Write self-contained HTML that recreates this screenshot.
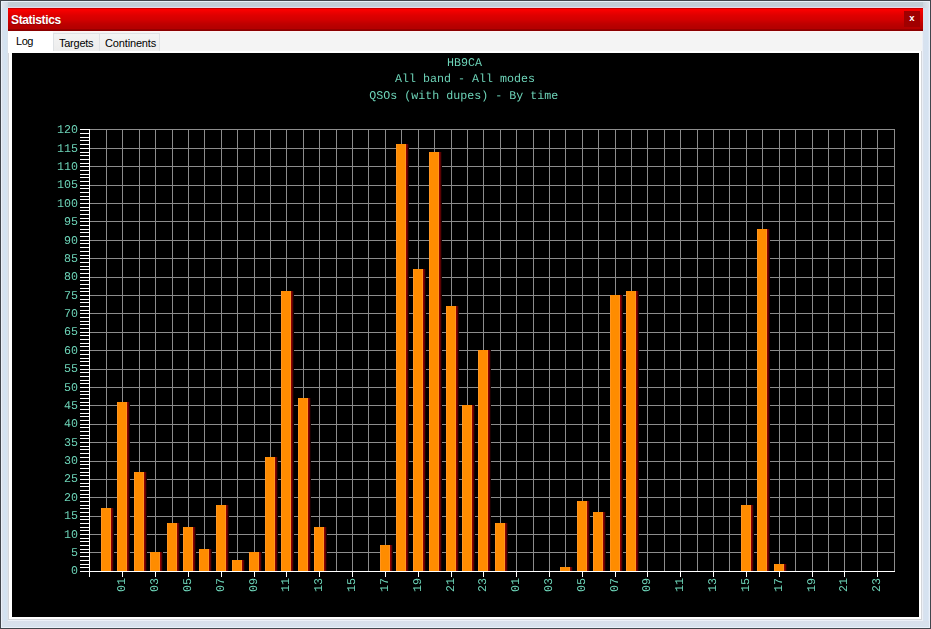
<!DOCTYPE html>
<html><head><meta charset="utf-8"><title>Statistics</title>
<style>
html,body{margin:0;padding:0;}
body{width:931px;height:629px;overflow:hidden;background:#41454c;font-family:"Liberation Sans",sans-serif;position:relative;}
.abs{position:absolute;}
span,.close{opacity:.996;}
.f1{left:1px;top:1px;width:929px;height:627px;background:#eaf1fa;}
.f2{left:2px;top:2px;width:927px;height:625px;background:#d6e1ee;}
.ftop{left:2px;top:2px;width:927px;height:6px;background:linear-gradient(#c3ced6 0,#c3ced6 60%,#c2d0e0 70%,#c0d4ec 83%,#c4d6ec 100%);}
.c1{left:2px;top:2px;width:6px;height:6px;background:linear-gradient(90deg,#e2e6f0,#d0d8e4);}
.c2{left:923px;top:2px;width:6px;height:6px;background:linear-gradient(90deg,#ccd6e0,#dfe6ee);}
.ftl{left:8px;top:7px;width:915px;height:1px;background:#ecd8e0;}
.fl{left:2px;top:8px;width:6px;height:613px;background:linear-gradient(90deg,#dce0ea,#d8e2ee 20%,#d3e3f2 45%,#d3e3f2 60%,#d6e2ee 80%,#dce2ea);}
.fr{left:923px;top:8px;width:6px;height:613px;background:linear-gradient(90deg,#dde1ea,#d6e2f0 20%,#d6e2f0 80%,#e0eaf6);}
.fb{left:2px;top:621px;width:927px;height:6px;background:linear-gradient(#d9e0ec,#d6e2ee);}
.client{left:8px;top:8px;width:915px;height:613px;background:#ebf0f8;}
.title{left:8px;top:8px;width:915px;height:23px;background:linear-gradient(#c80000 0,#c80000 4.3%,#fe0000 4.4%,#fa0000 8%,#ec0000 19.5%,#de0000 32.6%,#d40000 50%,#c00000 67.4%,#b60000 82%,#b40000 91.2%,#980000 91.3%,#940000 95.6%,#8a0000 95.7%,#8a0000 100%);}
.title span{position:absolute;left:3px;top:5px;font-weight:bold;font-size:12px;line-height:14px;color:#fff;letter-spacing:-0.35px;text-shadow:0 1px 1px rgba(120,0,0,.6);}
.close{left:904px;top:11px;width:16px;height:16px;background:#a00000;color:#fff;font-weight:bold;font-size:9.5px;line-height:13px;text-align:center;}
.tabctl{left:8px;top:31px;width:914px;height:589px;background:#fff;box-sizing:border-box;border:1px solid #d4d6da;border-top:none;}
.strip{left:8px;top:31px;width:914px;height:20px;background:#f4f4f4;border-top:1px solid #fff4f4;box-sizing:border-box;}
.tab{box-sizing:border-box;font-size:11px;line-height:13px;color:#000;white-space:nowrap;}
.tsel{left:8px;top:31px;width:45px;height:22px;background:#fff;}
.tsel span{position:absolute;left:8px;top:4px;letter-spacing:-0.45px;}
.t2{left:53px;top:33px;width:47px;height:18px;background:linear-gradient(#f4f4f4,#ececec);border:1px solid #dfe2e5;border-bottom:none;}
.t3{left:99px;top:33px;width:61px;height:18px;background:linear-gradient(#f4f4f4,#ececec);border:1px solid #dfe2e5;border-bottom:none;}
.t2 span,.t3 span{position:absolute;left:5px;top:2.5px;letter-spacing:-0.25px;}
.t3 span{letter-spacing:-0.15px;}
.chart{position:absolute;left:12px;top:53px;display:block;}
</style></head><body>
<div class="abs f1"></div><div class="abs f2"></div><div class="abs ftop"></div><div class="abs ftl"></div><div class="abs c1"></div><div class="abs c2"></div><div class="abs fl"></div><div class="abs fr"></div><div class="abs fb"></div>
<div class="abs client"></div>
<div class="abs title"><span>Statistics</span></div>
<div class="abs close">x</div>
<div class="abs tabctl"></div>
<div class="abs strip"></div>
<div class="abs tab tsel"><span>Log</span></div>
<div class="abs tab t2"><span>Targets</span></div>
<div class="abs tab t3"><span>Continents</span></div>
<svg class="chart" width="907" height="564" viewBox="12 53 907 564">
<rect x="12" y="53" width="907" height="564" fill="#000"/>
<path d="M90 571.5H895 M90 552.5H895 M90 534.5H895 M90 516.5H895 M90 497.5H895 M90 479.5H895 M90 461.5H895 M90 442.5H895 M90 424.5H895 M90 405.5H895 M90 387.5H895 M90 369.5H895 M90 350.5H895 M90 332.5H895 M90 313.5H895 M90 295.5H895 M90 277.5H895 M90 258.5H895 M90 240.5H895 M90 221.5H895 M90 203.5H895 M90 185.5H895 M90 166.5H895 M90 148.5H895 M90 129.5H895 M106.5 129V572 M122.5 129V572 M139.5 129V572 M155.5 129V572 M172.5 129V572 M188.5 129V572 M204.5 129V572 M221.5 129V572 M237.5 129V572 M254.5 129V572 M270.5 129V572 M286.5 129V572 M303.5 129V572 M319.5 129V572 M336.5 129V572 M352.5 129V572 M368.5 129V572 M385.5 129V572 M401.5 129V572 M418.5 129V572 M434.5 129V572 M451.5 129V572 M467.5 129V572 M483.5 129V572 M500.5 129V572 M516.5 129V572 M533.5 129V572 M549.5 129V572 M565.5 129V572 M582.5 129V572 M598.5 129V572 M615.5 129V572 M631.5 129V572 M647.5 129V572 M664.5 129V572 M680.5 129V572 M697.5 129V572 M713.5 129V572 M729.5 129V572 M746.5 129V572 M762.5 129V572 M779.5 129V572 M795.5 129V572 M812.5 129V572 M828.5 129V572 M844.5 129V572 M861.5 129V572 M877.5 129V572 M894.5 129V572" stroke="#8c8c8c" stroke-width="1" fill="none" shape-rendering="crispEdges"/>
<g shape-rendering="crispEdges"><path d="M111 508h1v64h-1z M127 402h1v170h-1z M144 472h1v100h-1z M160 552h1v20h-1z M177 523h1v49h-1z M193 527h1v45h-1z M209 549h1v23h-1z M226 505h1v67h-1z M242 560h1v12h-1z M259 552h1v20h-1z M275 457h1v115h-1z M291 291h1v281h-1z M308 398h1v174h-1z M324 527h1v45h-1z M390 545h1v27h-1z M406 144h1v428h-1z M423 269h1v303h-1z M439 152h1v420h-1z M456 306h1v266h-1z M472 405h1v167h-1z M488 350h1v222h-1z M505 523h1v49h-1z M570 567h1v5h-1z M587 501h1v71h-1z M603 512h1v60h-1z M620 295h1v277h-1z M636 291h1v281h-1z M751 505h1v67h-1z M767 229h1v343h-1z M784 564h1v8h-1z" fill="#8b0000"/><path d="M112 508h1v64h-1z M128 402h1v170h-1z M145 472h1v100h-1z M161 552h1v20h-1z M178 523h1v49h-1z M194 527h1v45h-1z M210 549h1v23h-1z M227 505h1v67h-1z M243 560h1v12h-1z M260 552h1v20h-1z M276 457h1v115h-1z M292 291h1v281h-1z M309 398h1v174h-1z M325 527h1v45h-1z M391 545h1v27h-1z M407 144h1v428h-1z M424 269h1v303h-1z M440 152h1v420h-1z M457 306h1v266h-1z M473 405h1v167h-1z M489 350h1v222h-1z M506 523h1v49h-1z M571 567h1v5h-1z M588 501h1v71h-1z M604 512h1v60h-1z M621 295h1v277h-1z M637 291h1v281h-1z M752 505h1v67h-1z M768 229h1v343h-1z M785 564h1v8h-1z" fill="#5c0303"/><path d="M113 508h1v64h-1z M129 402h1v170h-1z M146 472h1v100h-1z M162 552h1v20h-1z M179 523h1v49h-1z M195 527h1v45h-1z M211 549h1v23h-1z M228 505h1v67h-1z M244 560h1v12h-1z M261 552h1v20h-1z M277 457h1v115h-1z M293 291h1v281h-1z M310 398h1v174h-1z M326 527h1v45h-1z M392 545h1v27h-1z M408 144h1v428h-1z M425 269h1v303h-1z M441 152h1v420h-1z M458 306h1v266h-1z M474 405h1v167h-1z M490 350h1v222h-1z M507 523h1v49h-1z M572 567h1v5h-1z M589 501h1v71h-1z M605 512h1v60h-1z M622 295h1v277h-1z M638 291h1v281h-1z M753 505h1v67h-1z M769 229h1v343h-1z M786 564h1v8h-1z" fill="#1a0000"/><path d="M102 508h8v64h-8z M118 402h8v170h-8z M135 472h8v100h-8z M151 552h8v20h-8z M168 523h8v49h-8z M184 527h8v45h-8z M200 549h8v23h-8z M217 505h8v67h-8z M233 560h8v12h-8z M250 552h8v20h-8z M266 457h8v115h-8z M282 291h8v281h-8z M299 398h8v174h-8z M315 527h8v45h-8z M381 545h8v27h-8z M397 144h8v428h-8z M414 269h8v303h-8z M430 152h8v420h-8z M447 306h8v266h-8z M463 405h8v167h-8z M479 350h8v222h-8z M496 523h8v49h-8z M561 567h8v5h-8z M578 501h8v71h-8z M594 512h8v60h-8z M611 295h8v277h-8z M627 291h8v281h-8z M742 505h8v67h-8z M758 229h8v343h-8z M775 564h8v8h-8z" fill="#ff8c00"/><path d="M101 508h1v64h-1zM110 508h1v64h-1z M117 402h1v170h-1zM126 402h1v170h-1z M134 472h1v100h-1zM143 472h1v100h-1z M150 552h1v20h-1zM159 552h1v20h-1z M167 523h1v49h-1zM176 523h1v49h-1z M183 527h1v45h-1zM192 527h1v45h-1z M199 549h1v23h-1zM208 549h1v23h-1z M216 505h1v67h-1zM225 505h1v67h-1z M232 560h1v12h-1zM241 560h1v12h-1z M249 552h1v20h-1zM258 552h1v20h-1z M265 457h1v115h-1zM274 457h1v115h-1z M281 291h1v281h-1zM290 291h1v281h-1z M298 398h1v174h-1zM307 398h1v174h-1z M314 527h1v45h-1zM323 527h1v45h-1z M380 545h1v27h-1zM389 545h1v27h-1z M396 144h1v428h-1zM405 144h1v428h-1z M413 269h1v303h-1zM422 269h1v303h-1z M429 152h1v420h-1zM438 152h1v420h-1z M446 306h1v266h-1zM455 306h1v266h-1z M462 405h1v167h-1zM471 405h1v167h-1z M478 350h1v222h-1zM487 350h1v222h-1z M495 523h1v49h-1zM504 523h1v49h-1z M560 567h1v5h-1zM569 567h1v5h-1z M577 501h1v71h-1zM586 501h1v71h-1z M593 512h1v60h-1zM602 512h1v60h-1z M610 295h1v277h-1zM619 295h1v277h-1z M626 291h1v281h-1zM635 291h1v281h-1z M741 505h1v67h-1zM750 505h1v67h-1z M757 229h1v343h-1zM766 229h1v343h-1z M774 564h1v8h-1zM783 564h1v8h-1z" fill="#ff9622"/></g>
<path d="M89.5 129V577 M80 571.5H895 M80 571.5H90 M80 567.5H90 M80 564.5H90 M80 560.5H90 M80 556.5H90 M80 552.5H90 M80 549.5H90 M80 545.5H90 M80 541.5H90 M80 538.5H90 M80 534.5H90 M80 530.5H90 M80 527.5H90 M80 523.5H90 M80 519.5H90 M80 516.5H90 M80 512.5H90 M80 508.5H90 M80 505.5H90 M80 501.5H90 M80 497.5H90 M80 494.5H90 M80 490.5H90 M80 486.5H90 M80 483.5H90 M80 479.5H90 M80 475.5H90 M80 472.5H90 M80 468.5H90 M80 464.5H90 M80 461.5H90 M80 457.5H90 M80 453.5H90 M80 449.5H90 M80 446.5H90 M80 442.5H90 M80 438.5H90 M80 435.5H90 M80 431.5H90 M80 427.5H90 M80 424.5H90 M80 420.5H90 M80 416.5H90 M80 413.5H90 M80 409.5H90 M80 405.5H90 M80 402.5H90 M80 398.5H90 M80 394.5H90 M80 391.5H90 M80 387.5H90 M80 383.5H90 M80 380.5H90 M80 376.5H90 M80 372.5H90 M80 369.5H90 M80 365.5H90 M80 361.5H90 M80 358.5H90 M80 354.5H90 M80 350.5H90 M80 346.5H90 M80 343.5H90 M80 339.5H90 M80 335.5H90 M80 332.5H90 M80 328.5H90 M80 324.5H90 M80 321.5H90 M80 317.5H90 M80 313.5H90 M80 310.5H90 M80 306.5H90 M80 302.5H90 M80 299.5H90 M80 295.5H90 M80 291.5H90 M80 288.5H90 M80 284.5H90 M80 280.5H90 M80 277.5H90 M80 273.5H90 M80 269.5H90 M80 266.5H90 M80 262.5H90 M80 258.5H90 M80 255.5H90 M80 251.5H90 M80 247.5H90 M80 243.5H90 M80 240.5H90 M80 236.5H90 M80 232.5H90 M80 229.5H90 M80 225.5H90 M80 221.5H90 M80 218.5H90 M80 214.5H90 M80 210.5H90 M80 207.5H90 M80 203.5H90 M80 199.5H90 M80 196.5H90 M80 192.5H90 M80 188.5H90 M80 185.5H90 M80 181.5H90 M80 177.5H90 M80 174.5H90 M80 170.5H90 M80 166.5H90 M80 163.5H90 M80 159.5H90 M80 155.5H90 M80 152.5H90 M80 148.5H90 M80 144.5H90 M80 140.5H90 M80 137.5H90 M80 133.5H90 M80 129.5H90 M122.5 571V577 M155.5 571V577 M188.5 571V577 M221.5 571V577 M254.5 571V577 M286.5 571V577 M319.5 571V577 M352.5 571V577 M385.5 571V577 M418.5 571V577 M451.5 571V577 M483.5 571V577 M516.5 571V577 M549.5 571V577 M582.5 571V577 M615.5 571V577 M647.5 571V577 M680.5 571V577 M713.5 571V577 M746.5 571V577 M779.5 571V577 M812.5 571V577 M844.5 571V577 M877.5 571V577" stroke="#fff" stroke-width="1" fill="none" shape-rendering="crispEdges"/>
<g fill="#6ed6ba" font-family="'Liberation Mono', monospace" font-size="11.8px" text-rendering="geometricPrecision" opacity="0.996">
<text transform="translate(464.4 65.6) scale(0.9887 1)" text-anchor="middle">HB9CA</text>
<text transform="translate(465.0 82.1) scale(0.9887 1)" text-anchor="middle">All band - All modes</text>
<text transform="translate(463.8 98.6) scale(0.9887 1)" text-anchor="middle">QSOs (with dupes) - By time</text>
<text transform="translate(77.9 574.2) scale(0.9887 1)" text-anchor="end">0</text>
<text transform="translate(77.9 555.8) scale(0.9887 1)" text-anchor="end">5</text>
<text transform="translate(77.9 537.5) scale(0.9887 1)" text-anchor="end">10</text>
<text transform="translate(77.9 519.1) scale(0.9887 1)" text-anchor="end">15</text>
<text transform="translate(77.9 500.7) scale(0.9887 1)" text-anchor="end">20</text>
<text transform="translate(77.9 482.3) scale(0.9887 1)" text-anchor="end">25</text>
<text transform="translate(77.9 464.0) scale(0.9887 1)" text-anchor="end">30</text>
<text transform="translate(77.9 445.6) scale(0.9887 1)" text-anchor="end">35</text>
<text transform="translate(77.9 427.2) scale(0.9887 1)" text-anchor="end">40</text>
<text transform="translate(77.9 408.8) scale(0.9887 1)" text-anchor="end">45</text>
<text transform="translate(77.9 390.5) scale(0.9887 1)" text-anchor="end">50</text>
<text transform="translate(77.9 372.1) scale(0.9887 1)" text-anchor="end">55</text>
<text transform="translate(77.9 353.7) scale(0.9887 1)" text-anchor="end">60</text>
<text transform="translate(77.9 335.3) scale(0.9887 1)" text-anchor="end">65</text>
<text transform="translate(77.9 317.0) scale(0.9887 1)" text-anchor="end">70</text>
<text transform="translate(77.9 298.6) scale(0.9887 1)" text-anchor="end">75</text>
<text transform="translate(77.9 280.2) scale(0.9887 1)" text-anchor="end">80</text>
<text transform="translate(77.9 261.8) scale(0.9887 1)" text-anchor="end">85</text>
<text transform="translate(77.9 243.5) scale(0.9887 1)" text-anchor="end">90</text>
<text transform="translate(77.9 225.1) scale(0.9887 1)" text-anchor="end">95</text>
<text transform="translate(77.9 206.7) scale(0.9887 1)" text-anchor="end">100</text>
<text transform="translate(77.9 188.3) scale(0.9887 1)" text-anchor="end">105</text>
<text transform="translate(77.9 170.0) scale(0.9887 1)" text-anchor="end">110</text>
<text transform="translate(77.9 151.6) scale(0.9887 1)" text-anchor="end">115</text>
<text transform="translate(77.9 133.2) scale(0.9887 1)" text-anchor="end">120</text>
<text transform="translate(124.8 592) rotate(-90) scale(0.9887 1)">01</text>
<text transform="translate(157.8 592) rotate(-90) scale(0.9887 1)">03</text>
<text transform="translate(190.8 592) rotate(-90) scale(0.9887 1)">05</text>
<text transform="translate(223.8 592) rotate(-90) scale(0.9887 1)">07</text>
<text transform="translate(256.8 592) rotate(-90) scale(0.9887 1)">09</text>
<text transform="translate(288.8 592) rotate(-90) scale(0.9887 1)">11</text>
<text transform="translate(321.8 592) rotate(-90) scale(0.9887 1)">13</text>
<text transform="translate(354.8 592) rotate(-90) scale(0.9887 1)">15</text>
<text transform="translate(387.8 592) rotate(-90) scale(0.9887 1)">17</text>
<text transform="translate(420.8 592) rotate(-90) scale(0.9887 1)">19</text>
<text transform="translate(453.8 592) rotate(-90) scale(0.9887 1)">21</text>
<text transform="translate(485.8 592) rotate(-90) scale(0.9887 1)">23</text>
<text transform="translate(518.8 592) rotate(-90) scale(0.9887 1)">01</text>
<text transform="translate(551.8 592) rotate(-90) scale(0.9887 1)">03</text>
<text transform="translate(584.8 592) rotate(-90) scale(0.9887 1)">05</text>
<text transform="translate(617.8 592) rotate(-90) scale(0.9887 1)">07</text>
<text transform="translate(649.8 592) rotate(-90) scale(0.9887 1)">09</text>
<text transform="translate(682.8 592) rotate(-90) scale(0.9887 1)">11</text>
<text transform="translate(715.8 592) rotate(-90) scale(0.9887 1)">13</text>
<text transform="translate(748.8 592) rotate(-90) scale(0.9887 1)">15</text>
<text transform="translate(781.8 592) rotate(-90) scale(0.9887 1)">17</text>
<text transform="translate(814.8 592) rotate(-90) scale(0.9887 1)">19</text>
<text transform="translate(846.8 592) rotate(-90) scale(0.9887 1)">21</text>
<text transform="translate(879.8 592) rotate(-90) scale(0.9887 1)">23</text>
</g>
</svg>
</body></html>
